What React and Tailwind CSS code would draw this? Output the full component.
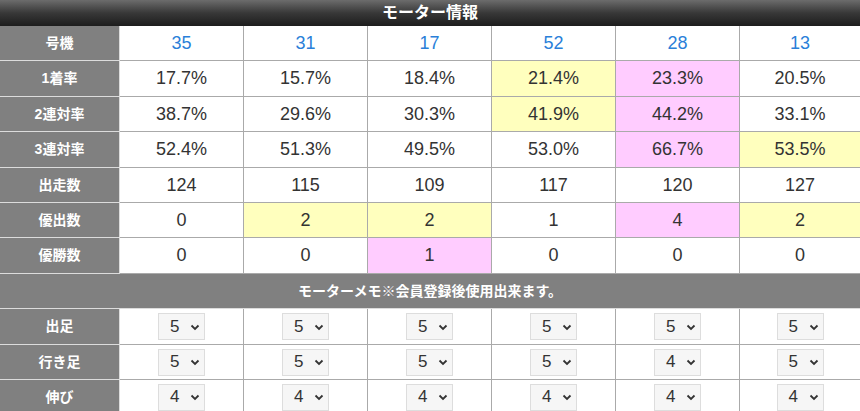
const cols = ["35", "31", "17", "52", "28", "13"];

// y = yellow, p = pink
const stats = [
  { label: "1着率", h: "h-[36px]", cells: ["17.7%", "15.7%", "18.4%", ["21.4%", "y"], ["23.3%", "p"], "20.5%"] },
  { label: "2連対率", h: "h-[35px]", cells: ["38.7%", "29.6%", "30.3%", ["41.9%", "y"], ["44.2%", "p"], "33.1%"] },
  { label: "3連対率", h: "h-[36px]", cells: ["52.4%", "51.3%", "49.5%", "53.0%", ["66.7%", "p"], ["53.5%", "y"]] },
  { label: "出走数", h: "h-[35px]", cells: ["124", "115", "109", "117", "120", "127"] },
  { label: "優出数", h: "h-[35px]", cells: ["0", ["2", "y"], ["2", "y"], "1", ["4", "p"], ["2", "y"]] },
  { label: "優勝数", h: "h-[36px]", cells: ["0", "0", ["1", "p"], "0", "0", "0"] },
];

const memos = [
  { label: "出足", h: "h-[36px]", vals: ["5", "5", "5", "5", "5", "5"] },
  { label: "行き足", h: "h-[35px]", vals: ["5", "5", "5", "5", "4", "5"] },
  { label: "伸び", h: "h-[35px]", vals: ["4", "4", "4", "4", "4", "4"] },
];

const grid = "grid grid-cols-[120px_124px_124px_124px_124px_124px_1fr]";

function Label({ children }) {
  return (
    <div className="flex items-center justify-center bg-[#808080] border-r border-b border-[#dcdcdc] text-[14px] font-bold text-white">
      {children}
    </div>
  );
}

function Cell({ children, tone, last }) {
  const bg = tone === "y" ? "bg-[#ffffbe]" : tone === "p" ? "bg-[#ffccff]" : "bg-white";
  return (
    <div className={`flex items-center justify-center border-b border-[#aaaaaa] ${last ? "" : "border-r"} ${bg}`}>
      {children}
    </div>
  );
}

function FakeSelect({ value }) {
  return (
    <div className="flex h-[27px] w-[47px] items-center justify-between border border-[#dddddd] bg-[#f6f6f6] pl-[11px] pr-[4px] text-[17px] text-[#333]">
      <span>{value}</span>
      <svg width="10" height="10" viewBox="0 0 10 10">
        <path d="M1.5 3.5 L5 7 L8.5 3.5" fill="none" stroke="#333" strokeWidth="1.8" />
      </svg>
    </div>
  );
}

export default function App() {
  return (
    <div className="w-[860px] h-[411px] overflow-hidden bg-white font-['Liberation_Sans','Noto_Sans_CJK_JP',sans-serif] text-[#333]">
      <div className="flex h-[26px] items-center justify-center bg-linear-to-b from-[#6c6c6c] via-[#383838] to-[#1d1d1d] text-[16px] font-bold text-white">
        モーター情報
      </div>

      <div className={`${grid} h-[35px]`}>
        <Label>号機</Label>
        {cols.map((c, i) => (
          <Cell key={c} last={i === 5}>
            <span className="text-[18px] text-[#2a7fd9]">{c}</span>
          </Cell>
        ))}
      </div>

      {stats.map((row) => (
        <div key={row.label} className={`${grid} ${row.h}`}>
          <Label>{row.label}</Label>
          {row.cells.map((c, i) => {
            const [v, tone] = Array.isArray(c) ? c : [c, null];
            return (
              <Cell key={i} tone={tone} last={i === 5}>
                <span className="text-[18px]">{v}</span>
              </Cell>
            );
          })}
        </div>
      ))}

      <div className="flex h-[35px] items-center justify-center border-b border-[#dcdcdc] bg-[#808080] text-[14px] font-bold text-white">
        モーターメモ※会員登録後使用出来ます。
      </div>

      {memos.map((row) => (
        <div key={row.label} className={`${grid} ${row.h}`}>
          <Label>{row.label}</Label>
          {row.vals.map((v, i) => (
            <Cell key={i} last={i === 5}>
              <FakeSelect value={v} />
            </Cell>
          ))}
        </div>
      ))}
    </div>
  );
}
